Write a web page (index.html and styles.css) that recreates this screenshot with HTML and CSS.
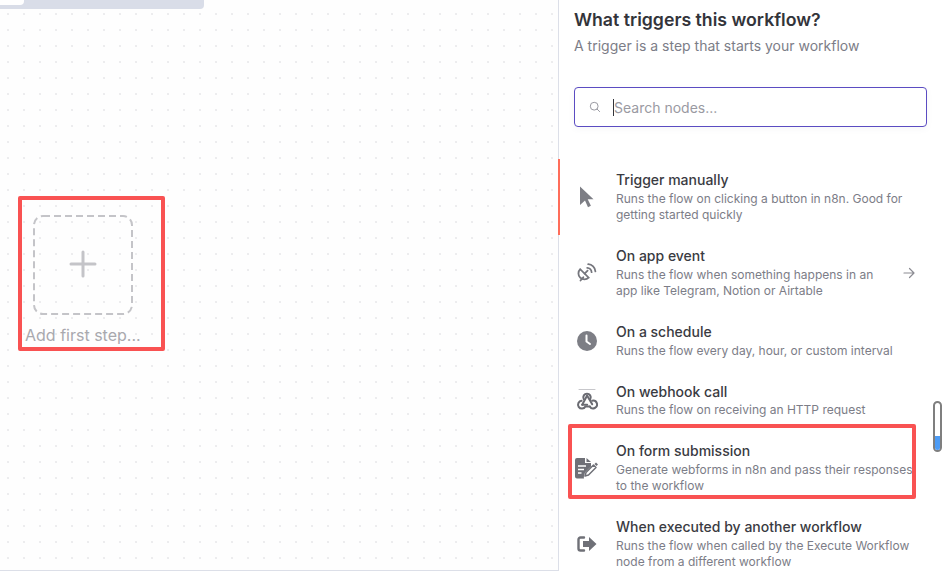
FILE: index.html
```html
<!DOCTYPE html>
<html lang="en">
<head>
<meta charset="utf-8">
<title>What triggers this workflow?</title>
<link rel="stylesheet" href="styles.css">
</head>
<body>
<div class="app">
  <main class="canvas">
    <div class="topbar"><div class="toptab"></div></div>
    <div class="first-step">
      <div class="add-box">
        <svg class="dash" width="100" height="100" viewBox="0 0 100 100"><rect x="1" y="1" width="98" height="98" rx="9" fill="none" stroke="#c4c4c8" stroke-width="2" stroke-dasharray="7 4"/></svg>
        <svg class="plus" width="28" height="28" viewBox="0 0 28 28"><path d="M14 2v24M2 14h24" stroke="#c4c4c8" stroke-width="3" stroke-linecap="round" fill="none"/></svg>
      </div>
      <div class="add-label">Add first step...</div>
    </div>
    <div class="mark mark-step"></div>
  </main>
  <aside class="panel">
    <header class="head">
      <h1 class="title">What triggers this workflow?</h1>
      <p class="sub">A trigger is a step that starts your workflow</p>
    </header>
    <div class="search">
      <svg class="search-icon" width="12" height="12" viewBox="0 0 12 12"><circle cx="5.2" cy="5.2" r="3.9" fill="none" stroke="#9a9aa2" stroke-width="1"/><path d="M8 8l2.6 2.6" stroke="#9a9aa2" stroke-width="1" stroke-linecap="round"/></svg>
      <span class="caret"></span><span class="placeholder">Search nodes...</span>
    </div>
    <ul class="list">
      <li class="item active">
        <div class="icon"><svg width="16" height="22" viewBox="0 0 16 22"><path d="M1 0.500l13.500 12.800h-5.800l3.200 6.500-2.900 1.400-3-6.600L1 19z" fill="#7d7e85"/></svg></div>
        <div class="body"><div class="name">Trigger manually</div><div class="desc">Runs the flow on clicking a button in n8n. Good for getting started quickly</div></div>
      </li>
      <li class="item">
        <div class="icon"><svg width="20" height="20" viewBox="0 0 20 20" fill="none" stroke="#75767d" stroke-width="1.800" stroke-linecap="round"><path d="M3.200 6.200a6 6 0 0 0 8.500 8.500z"/><path d="M3.500 17.500l2.800-3.200"/><path d="M7.600 10.600l3-3"/><path d="M10.200 4.800a4.600 4.600 0 0 1 4.400 4.400"/><path d="M11.200 1.200a7.800 7.800 0 0 1 7.200 7.200"/></svg></div>
        <div class="body narrow"><div class="name">On app event</div><div class="desc">Runs the flow when something happens in an app like Telegram, Notion or Airtable</div></div>
        <svg class="arrow" width="12" height="12" viewBox="0 0 12 12" fill="none" stroke="#8b8b92" stroke-width="1.200" stroke-linecap="round" stroke-linejoin="round"><path d="M1 6h10M6.500 1.500L11 6l-4.500 4.500"/></svg>
      </li>
      <li class="item single">
        <div class="icon"><svg width="20" height="20" viewBox="0 0 20 20"><circle cx="10" cy="10" r="10" fill="#7d7e85"/><path d="M9.500 4.500v6l3.500 2.500" fill="none" stroke="#fff" stroke-width="2" stroke-linecap="round" stroke-linejoin="round"/></svg></div>
        <div class="body"><div class="name">On a schedule</div><div class="desc">Runs the flow every day, hour, or custom interval</div></div>
      </li>
      <li class="item single">
        <div class="icon"><svg class="hook" width="22" height="22" viewBox="0 0 22 22" fill="none" stroke="#6a6b72" stroke-width="2" stroke-linecap="round"><path d="M3 0.500h16" stroke-width="0.800" stroke="#b9b9be"/><path d="M7.700 10a3.700 3.700 0 1 1 6.600 0"/><path d="M11 6.800L6.200 15.700"/><path d="M11.200 6.800l5 8.500"/><path d="M5.600 11.800a3.900 3.900 0 1 0 3.800 5.700h4.400"/><path d="M6.200 15.700h5"/><path d="M13.800 17.500a3.900 3.900 0 1 0 2.400-5.800"/></svg></div>
        <div class="body"><div class="name">On webhook call</div><div class="desc hook-desc">Runs the flow on receiving an HTTP request</div></div>
      </li>
      <li class="item">
        <div class="icon"><svg class="form" width="24" height="22" viewBox="0 0 24 22"><path d="M3 1h8v5h6v3.500L11 15.500 9.800 20l0.200 1.500H3a2 2 0 0 1-2-2V3a2 2 0 0 1 2-2z" fill="#6f7077"/><path d="M12.500 1l4.500 4h-4.500z" fill="#6f7077"/><path d="M4 9h8M4 12.500h6M4 16h3.500" stroke="#fff" stroke-width="1.300"/><path d="M12 15.500l7.500-7.500 2.500 2.500-7.500 7.500-3.500 1z" fill="none" stroke="#6f7077" stroke-width="1.500" stroke-linejoin="round"/><path d="M20.500 7l1.500-1.500 2 2-1.500 1.500z" fill="#6f7077"/></svg></div>
        <div class="body"><div class="name">On form submission</div><div class="desc">Generate webforms in n8n and pass their responses to the workflow</div></div>
      </li>
      <li class="item">
        <div class="icon"><svg width="20" height="16" viewBox="0 0 20 16"><path d="M7 1.500H3.500A2 2 0 0 0 1.500 3.500v9a2 2 0 0 0 2 2H7" fill="none" stroke="#6f7077" stroke-width="2.400" stroke-linecap="round"/><path d="M12 1l7.500 7-7.500 7v-4H6V5h6z" fill="#6f7077"/></svg></div>
        <div class="body"><div class="name">When executed by another workflow</div><div class="desc">Runs the flow when called by the Execute Workflow node from a different workflow</div></div>
      </li>
    </ul>
    <div class="scrollbar"><div class="thumb"></div></div>
    <div class="mark mark-form"></div>
  </aside>
</div>
</body>
</html>
```

FILE: styles.css
```css
* { box-sizing: border-box; }
html, body { margin: 0; padding: 0; height: 100%; overflow: hidden; }
body { font-family: Inter, "Liberation Sans", sans-serif; background: #fff; color: #2d2e33; }
.app { display: flex; width: 943px; height: 571px; }

.canvas {
  position: relative;
  width: 558px;
  height: 571px;
  background-color: #fefefe;
  background-image: radial-gradient(circle at center, #d9d9dd 0.6px, transparent 0.8px);
  background-size: 16px 16px;
  background-position: 0 6px;
  border-bottom: 1px solid #dcdfe8;
}
.topbar {
  width: 204px;
  height: 9px;
  background: #d9dde8;
  border-radius: 0 0 4px 0;
}
.toptab {
  width: 24px;
  height: 5px;
  background: #fff;
  border-radius: 0 0 4px 0;
}
.first-step {
  margin: 206px 0 0 25px;
  width: 120px;
}
.add-box {
  position: relative;
  display: flex;
  align-items: center;
  justify-content: center;
  width: 100px;
  height: 100px;
  margin-left: 8px;
}
.dash { position: absolute; left: 0; top: 0; }
.plus { margin-top: -2px; }
.add-label {
  margin-top: 10px;
  font-size: 16px;
  line-height: 20px;
  color: #a9a9ae;
  white-space: nowrap;
}
.mark { position: absolute; border: 4px solid #f95252; border-radius: 2px; pointer-events: none; }
.mark-step { left: 18px; top: 196px; width: 147px; height: 155px; }

.panel {
  position: relative;
  flex: 1;
  min-width: 0;
  height: 571px;
  background: #fff;
  border-left: 1px solid #dcdfe8;
}
.head { padding: 9px 16px 0 15px; }
.title { margin: 0; font-size: 17.700px; line-height: 22px; font-weight: 600; color: #33343a; }
.sub { margin: 5px 0 0; font-size: 14px; line-height: 20px; color: #7c7d87; }
.search {
  display: flex;
  align-items: center;
  width: 353px;
  height: 40px;
  margin: 31px 0 0 15px;
  padding-left: 14px;
  border: 1px solid #5b4cc2;
  border-radius: 4px;
  background: #fff;
  box-shadow: 0 2px 6px rgba(80, 80, 120, 0.05);
}
.search-icon { flex: none; }
.caret { width: 1px; height: 17px; margin-left: 12px; background: #33343a; }
.placeholder { font-size: 14px; color: #9a9aa2; }

.list { list-style: none; margin: 32px 0 0; padding: 0; }
.item {
  position: relative;
  display: flex;
  align-items: center;
  height: 76px;
  padding: 0 15px 0 0;
}
.item.single { height: 59.700px; }
.item.active::before {
  content: "";
  position: absolute;
  left: -1px;
  top: 0;
  width: 2px;
  height: 100%;
  background: #ff6d5a;
}
.icon {
  flex: none;
  display: flex;
  align-items: center;
  justify-content: center;
  width: 30px;
  margin-left: 13px;
  margin-right: 14px;
}
.hook { margin-top: -2px; }
.form { margin-left: -3px; }
.body { width: 300px; }
.body.narrow { width: 270px; }
.name { font-size: 14px; line-height: 18px; font-weight: 450; color: #3a3b42; margin-bottom: 2px; }
.desc { font-size: 12px; line-height: 16px; color: #7c7d87; }
.hook-desc { margin-top: -1px; }
.arrow { flex: none; position: absolute; left: 344px; top: 32px; }

.scrollbar {
  position: absolute;
  left: 374px;
  top: 401px;
  width: 9px;
  height: 51px;
  border: 2px solid #7f7f7f;
  border-radius: 5px;
  background: #fff;
  overflow: hidden;
}
.thumb { margin-top: 33px; height: 14px; background: #4d9cf5; }
.mark-form { left: 9px; top: 424px; width: 348px; height: 75px; }
```
